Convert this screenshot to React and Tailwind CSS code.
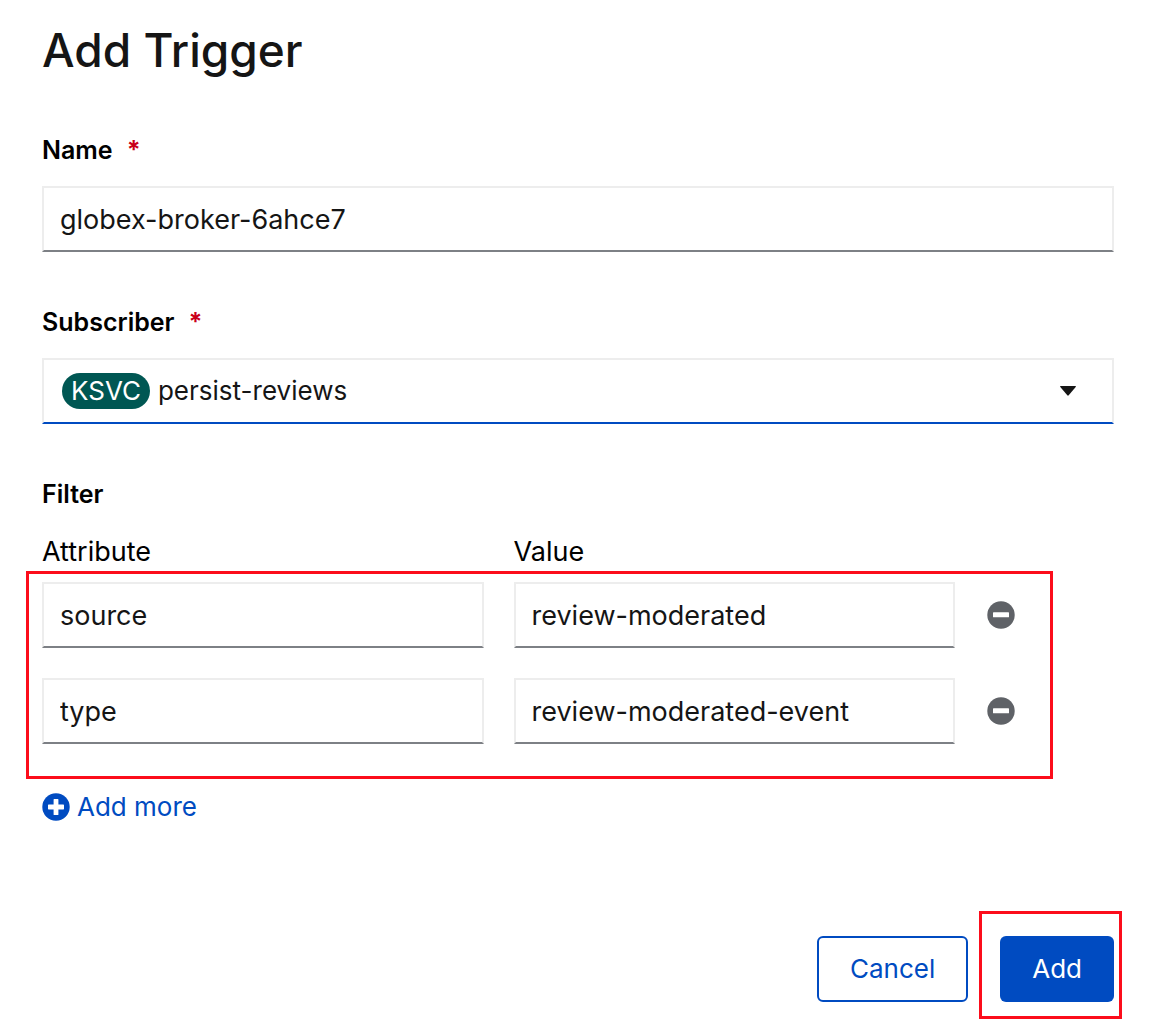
import { useState } from "react";

const labelClass = "text-[25px] leading-9 font-semibold text-black";
const fieldClass =
  "h-[66px] w-full min-w-0 border-2 border-[#ededed] border-b-[#7d8085] bg-white px-4 text-[27px] text-[#151515] outline-none";

function Required() {
  return (
    <span aria-hidden="true" className="ml-[14px] font-bold text-[#c9001a]">
      *
    </span>
  );
}

function MinusCircle() {
  return (
    <svg viewBox="0 0 28 28" className="size-7" aria-hidden="true">
      <circle cx="14" cy="14" r="13.7" fill="#5f6267" />
      <rect x="6" y="11.3" width="16" height="5" rx="0.6" fill="#fff" />
    </svg>
  );
}

function PlusCircle() {
  return (
    <svg viewBox="0 0 28 28" className="size-7" aria-hidden="true">
      <circle cx="14" cy="14" r="13.7" fill="#004bc1" />
      <path
        d="M12.2 6h3.6q.6 0 .6.6v5h5q.6 0 .6.6v3.6q0 .6-.6.6h-5v5q0 .6-.6.6h-3.6q-.6 0-.6-.6v-5h-5q-.6 0-.6-.6v-3.6q0-.6.6-.6h5v-5q0-.6.6-.6z"
        fill="#fff"
      />
    </svg>
  );
}

function Highlight({ className }) {
  return (
    <div
      aria-hidden="true"
      className={`pointer-events-none absolute border-3 border-[#fc0d1b] ${className}`}
    />
  );
}

export default function App() {
  const [name, setName] = useState("globex-broker-6ahce7");
  const [filters, setFilters] = useState([
    { attribute: "source", value: "review-moderated" },
    { attribute: "type", value: "review-moderated-event" },
  ]);

  const update = (index, key, text) =>
    setFilters(filters.map((f, i) => (i === index ? { ...f, [key]: text } : f)));

  return (
    <form
      onSubmit={(e) => e.preventDefault()}
      className="flex min-h-screen flex-col bg-white pt-5 pr-[46px] pb-[30px] pl-[42px] font-['Inter',sans-serif] text-[27px] leading-9 text-black"
    >
      <h1 className="text-[46px] leading-[60px] font-medium text-[#151515]">Add Trigger</h1>

      <div className="mt-[52px] flex flex-col gap-[18px]">
        <label htmlFor="name" className={labelClass}>
          Name
          <Required />
        </label>
        <input
          id="name"
          required
          value={name}
          onChange={(e) => setName(e.target.value)}
          className={fieldClass}
        />
      </div>

      <div className="mt-[52px] flex flex-col gap-[18px]">
        <label htmlFor="subscriber" className={labelClass}>
          Subscriber
          <Required />
        </label>
        <div className="flex h-[66px] items-center border-2 border-[#ededed] border-b-[#004bc1] pl-[18px]">
          <span className="rounded-full bg-[#005753] px-[9px] text-[26px] text-white">KSVC</span>
          <div className="relative flex min-w-0 flex-1 items-center">
            <select
              id="subscriber"
              className="h-15 w-full appearance-none bg-transparent pr-20 pl-2 text-[26px] text-[#151515] outline-none"
            >
              <option>persist-reviews</option>
            </select>
            <svg
              viewBox="0 0 16 10"
              className="pointer-events-none absolute right-9 h-[10px] w-4"
              aria-hidden="true"
            >
              <path d="M.6 0h14.8q.9 0 .3.9L8.7 9.3q-.7.7-1.4 0L.3.9Q-.3 0 .6 0z" fill="#151515" />
            </svg>
          </div>
        </div>
      </div>

      <fieldset className="mt-[52px]">
        <legend className={labelClass}>Filter</legend>
        <div className="mt-[22px] grid grid-cols-[1fr_1fr_129px] gap-x-[30px]">
          <span id="attribute-label">Attribute</span>
          <span id="value-label">Value</span>
        </div>
        <div className="relative mt-3 flex flex-col gap-[30px]">
          {filters.map((filter, i) => (
            <div key={i} className="grid grid-cols-[1fr_1fr_129px] items-center gap-x-[30px]">
              <input
                aria-labelledby="attribute-label"
                value={filter.attribute}
                onChange={(e) => update(i, "attribute", e.target.value)}
                className={fieldClass}
              />
              <input
                aria-labelledby="value-label"
                value={filter.value}
                onChange={(e) => update(i, "value", e.target.value)}
                className={fieldClass}
              />
              <button
                type="button"
                aria-label="Remove filter"
                onClick={() => setFilters(filters.filter((_, j) => j !== i))}
                className="ml-0.5 justify-self-start"
              >
                <MinusCircle />
              </button>
            </div>
          ))}
          <Highlight className="-top-[11px] right-[61px] -bottom-[35px] -left-4" />
        </div>
        <button
          type="button"
          onClick={() => setFilters([...filters, { attribute: "", value: "" }])}
          className="mt-[45px] flex items-center gap-[7px] text-[26px] text-[#004bc1]"
        >
          <PlusCircle />
          Add more
        </button>
      </fieldset>

      <div className="mt-[111px] flex justify-end gap-8">
        <button
          type="button"
          className="h-[66px] rounded-md border-2 border-[#004bc1] px-[31px] text-[26px] text-[#004bc1]"
        >
          Cancel
        </button>
        <div className="relative">
          <button
            type="submit"
            className="h-[66px] rounded-md bg-[#004bc1] px-8 text-[26px] text-white"
          >
            Add
          </button>
          <Highlight className="-top-[25px] -right-2 -bottom-[17px] -left-[21px]" />
        </div>
      </div>
    </form>
  );
}
